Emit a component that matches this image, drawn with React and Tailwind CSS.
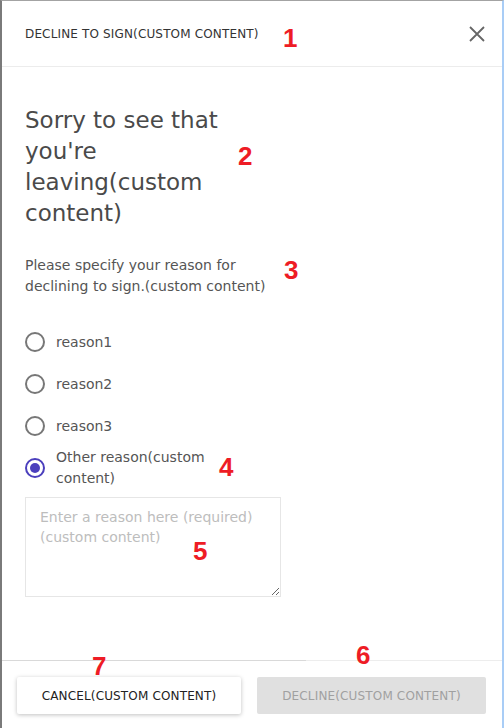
import { useState } from "react";

const reasons = ["reason1", "reason2", "reason3"];

const Radio = ({ checked }) => (
    <span className={`flex items-center justify-center w-5 h-5 rounded-full border-2 shrink-0 ${checked ? "border-[#4b3fbd]" : "border-[#777]"}`}>
        {checked && <span className="w-[10px] h-[10px] rounded-full bg-[#4b3fbd]" />}
    </span>
);

const Mark = ({ n, className }) => (
    <span className={`absolute text-[26px] font-bold leading-none text-[#ee1c25] ${className}`} style={{ fontFamily: "'Liberation Sans', sans-serif" }}>
        {n}
    </span>
);

const App = () => {
    const [picked, setPicked] = useState("other");

    return (
        <div className="relative w-[504px] h-[728px] bg-white flex flex-col border-t border-t-[#a3a3a3] border-l-2 border-l-[#7a7a7a] border-r-2 border-r-[#a9cdf6] overflow-hidden text-[#444]" style={{ fontFamily: "'DejaVu Sans', sans-serif" }}>
            {/* header */}
            <div className="flex items-center justify-between h-[66px] pl-[23px] pr-[16px] border-b border-[#ececec] shrink-0">
                <div className="text-[12px] tracking-[0.15px] text-[#333]">DECLINE TO SIGN(CUSTOM CONTENT)</div>
                <button className="text-[#666]">
                    <svg width="18" height="18" viewBox="0 0 18 18" fill="none" stroke="currentColor" strokeWidth="1.8">
                        <path d="M2 2l14 14M16 2L2 16" />
                    </svg>
                </button>
            </div>

            {/* body */}
            <div className="flex-1 pl-[23px] pt-[38px]">
                <h1 className="w-[250px] text-[23px] leading-[31px] text-[#4a4a4a]">Sorry to see that you're leaving(custom content)</h1>
                <p className="w-[250px] mt-[26px] text-[14px] leading-[21px] text-[#555]">Please specify your reason for declining to sign.(custom content)</p>

                <div className="mt-[35px] flex flex-col gap-[22px]">
                    {reasons.map((r) => (
                        <label key={r} className="flex items-center gap-[11px] h-5 cursor-pointer" onClick={() => setPicked(r)}>
                            <Radio checked={picked === r} />
                            <span className="text-[14px] text-[#555]">{r}</span>
                        </label>
                    ))}
                    <label className="flex items-center gap-[11px] cursor-pointer -mt-[11px]" onClick={() => setPicked("other")}>
                        <Radio checked={picked === "other"} />
                        <span className="w-[170px] text-[14px] leading-[21px] text-[#555]">Other reason(custom content)</span>
                    </label>
                </div>

                <textarea
                    className="mt-[8px] block w-[256px] h-[100px] border border-[#e6e6e6] px-[14px] py-[9px] text-[14px] leading-[20px] placeholder:text-[#bdbdbd] outline-none"
                    placeholder="Enter a reason here (required) (custom content)"
                />
            </div>

            {/* footer */}
            <div className="shrink-0">
                <div className="flex h-px">
                    <div className="w-[304px] bg-[#d9d9d9]" />
                    <div className="flex-1 bg-[#ededed]" />
                </div>
                <div className="flex gap-[16px] pl-[15px] pr-[16px] pt-[16px] pb-[14px]">
                    <button className="w-[224px] h-[37px] rounded-[2px] bg-white shadow-[0_1px_4px_rgba(0,0,0,0.25)] text-[12px] tracking-[0.15px] text-[#222]">CANCEL(CUSTOM CONTENT)</button>
                    <button className="flex-1 h-[37px] rounded-[2px] bg-[#e0e0e0] text-[12px] tracking-[0.15px] text-[#a0a0a0]">DECLINE(CUSTOM CONTENT)</button>
                </div>
            </div>

            <Mark n="1" className="left-[281px] top-[24px]" />
            <Mark n="2" className="left-[236px] top-[142px]" />
            <Mark n="3" className="left-[282px] top-[256px]" />
            <Mark n="4" className="left-[217px] top-[453px]" />
            <Mark n="5" className="left-[191px] top-[537px]" />
            <Mark n="6" className="left-[354px] top-[641px]" />
            <Mark n="7" className="left-[90px] top-[652px]" />
        </div>
    );
};

export default App;
